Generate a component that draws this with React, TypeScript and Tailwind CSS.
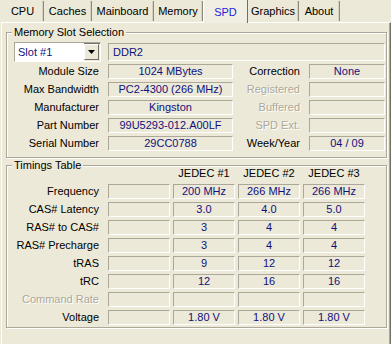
import clsx from "clsx";

const tabs = [
  { label: "CPU", w: "w-[42px]" },
  { label: "Caches", w: "w-[48px]" },
  { label: "Mainboard", w: "w-[62px]" },
  { label: "Memory", w: "w-[49px]" },
  { label: "SPD", w: "w-[45px]", active: true },
  { label: "Graphics", w: "w-[51px]" },
  { label: "About", w: "w-[41px]" },
];

const slotRows = [
  { label: "Module Size", value: "1024 MBytes", label2: "Correction", value2: "None" },
  { label: "Max Bandwidth", value: "PC2-4300 (266 MHz)", label2: "Registered", value2: "", off: true },
  { label: "Manufacturer", value: "Kingston", label2: "Buffered", value2: "", off: true },
  { label: "Part Number", value: "99U5293-012.A00LF", label2: "SPD Ext.", value2: "", off: true },
  { label: "Serial Number", value: "29CC0788", label2: "Week/Year", value2: "04 / 09" },
];

const timings = [
  { label: "Frequency", values: ["200 MHz", "266 MHz", "266 MHz"] },
  { label: "CAS# Latency", values: ["3.0", "4.0", "5.0"] },
  { label: "RAS# to CAS#", values: ["3", "4", "4"] },
  { label: "RAS# Precharge", values: ["3", "4", "4"] },
  { label: "tRAS", values: ["9", "12", "12"] },
  { label: "tRC", values: ["12", "16", "16"] },
  { label: "Command Rate", values: ["", "", ""], off: true },
  { label: "Voltage", values: ["1.80 V", "1.80 V", "1.80 V"] },
];

const disabledText = "text-[#aca899] [text-shadow:1px_1px_0_#fff]";

function Field({ children, className }: { children?: React.ReactNode; className?: string }) {
  return (
    <div
      className={clsx(
        "flex items-center justify-center whitespace-nowrap border border-t-[#aca899] border-l-[#aca899] border-b-white border-r-white leading-[13px] text-[#10107c]",
        className,
      )}
    >
      {children}
    </div>
  );
}

function Group({
  title,
  className,
  children,
}: {
  title: string;
  className?: string;
  children: React.ReactNode;
}) {
  return (
    <div
      className={clsx(
        "relative w-[381px] border border-[#aca899] shadow-[inset_1px_1px_0_#fff,1px_1px_0_#fff]",
        className,
      )}
    >
      <span className="absolute -top-[7px] left-[5px] bg-[#ece9d8] px-[2px] leading-[13px]">
        {title}
      </span>
      {children}
    </div>
  );
}

export default function App() {
  return (
    <div className="h-[344px] w-[391px] overflow-hidden bg-[#ece9d8] text-[11px] text-black [font-family:'Liberation_Sans',Arial,sans-serif]">
      {/* Tab strip */}
      <div className="relative z-10 flex h-[22px] items-end pl-[2px]">
        {tabs.map((t) =>
          t.active ? (
            <div
              key={t.label}
              className={clsx(
                t.w,
                "-mb-px flex h-[23px] justify-center border-l border-r border-l-white border-r-[#716f64] bg-[#f1efe4] pt-[6px] leading-[13px] text-[#2424d8]",
              )}
            >
              {t.label}
            </div>
          ) : (
            <div
              key={t.label}
              className={clsx(
                t.w,
                "mb-[1px] flex h-[20px] justify-center border-r border-r-[#8f8c7e] pt-[4px] leading-[13px] shadow-[inset_-1px_0_0_#d4d0c2]",
              )}
            >
              {t.label}
            </div>
          ),
        )}
      </div>

      {/* Page */}
      <div className="ml-[1px] h-[322px] border-l border-r border-t border-l-white border-r-[#716f64] border-t-white pl-[4px] pt-[9px] shadow-[inset_-1px_0_0_#aca899]">
        <Group title="Memory Slot Selection" className="h-[126px] pl-[7px] pt-[9px]">
          <div className="flex items-center">
            <div className="flex h-[20px] w-[87px] border border-t-[#aca899] border-l-[#aca899] border-b-white border-r-white shadow-[inset_1px_1px_0_#716f64]">
              <div className="flex flex-1 items-center bg-white pl-[3px] pt-[1px] text-[#10107c]">Slot #1</div>
              <div className="mt-[1px] mb-[1px] mr-[1px] flex w-[15px] items-center justify-center border border-t-white border-l-white border-b-[#716f64] border-r-[#716f64] bg-[#ece9d8]">
                <svg width="7" height="4" viewBox="0 0 7 4">
                  <path d="M0 0h7L3.5 4z" fill="#000" />
                </svg>
              </div>
            </div>
            <Field className="ml-[7px] h-[18px] w-[277px] justify-start pl-[4px]">DDR2</Field>
          </div>

          <div className="mt-[2px] flex flex-col gap-[3px]">
            {slotRows.map((r) => (
              <div key={r.label} className="flex h-[15px] items-center">
                <div className="w-[85px] text-right leading-[13px]">{r.label}</div>
                <Field className="ml-[9px] h-[15px] w-[125px]">{r.value}</Field>
                <div
                  className={clsx(
                    "w-[67px] text-right leading-[13px]",
                    r.off && disabledText,
                  )}
                >
                  {r.label2}
                </div>
                <Field className="ml-[9px] h-[15px] w-[76px]">{r.value2}</Field>
              </div>
            ))}
          </div>
        </Group>

        <Group title="Timings Table" className="mt-[7px] h-[163px] pl-[7px] pt-[1px]">
          <div className="ml-[94px] flex h-[13px] gap-[3px] leading-[13px]">
            <div className="w-[62px]" />
            <div className="w-[62px] text-center">JEDEC #1</div>
            <div className="w-[62px] text-center">JEDEC #2</div>
            <div className="w-[62px] text-center">JEDEC #3</div>
          </div>
          <div className="mt-[4px] flex flex-col gap-[3px]">
            {timings.map((r) => (
              <div key={r.label} className="flex h-[15px] items-center">
                <div className={clsx("w-[85px] text-right leading-[13px]", r.off && disabledText)}>
                  {r.label}
                </div>
                <div className="ml-[9px] flex gap-[3px]">
                  <Field className="h-[15px] w-[62px]" />
                  {r.values.map((v, i) => (
                    <Field key={i} className="h-[15px] w-[62px]">
                      {v}
                    </Field>
                  ))}
                </div>
              </div>
            ))}
          </div>
        </Group>
      </div>
    </div>
  );
}
